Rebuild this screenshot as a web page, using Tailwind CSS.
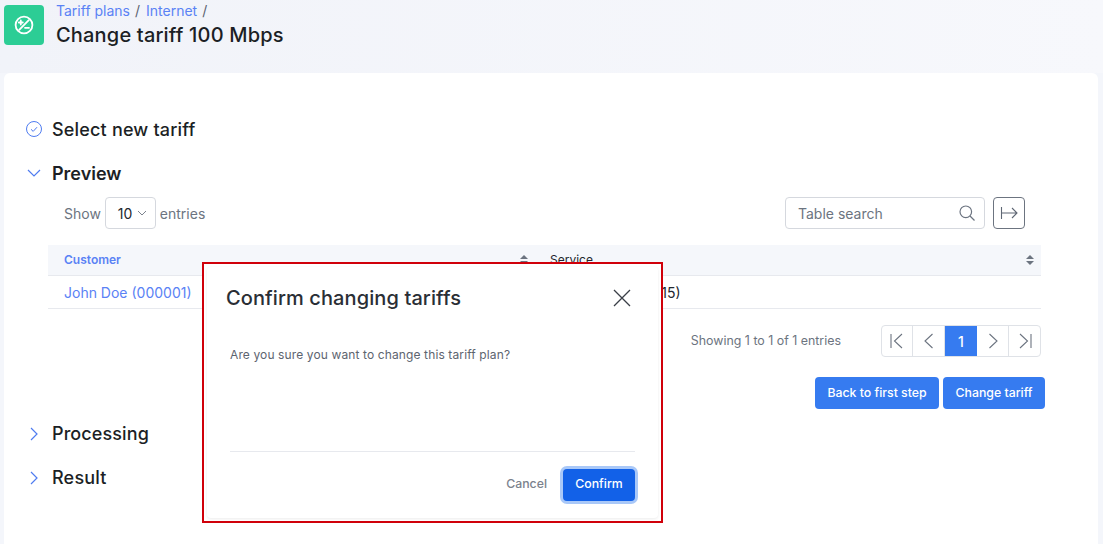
<!doctype html>
<html lang="en">
<head>
    <title>Change tariff</title>
    <meta charset="UTF-8">
    <meta name="viewport" content="width=device-width, initial-scale=1.0">
    <script src="https://cdn.jsdelivr.net/npm/@tailwindcss/browser@4"></script>
</head>
<body class="relative h-[544px] w-[1103px] overflow-hidden bg-[#f4f6fb] font-['Inter',sans-serif] text-[#1c1f25]">

<!-- Page header -->
<header class="flex h-[73px] items-start pl-1 bg-gradient-to-r from-[#f1f3f9] to-[#f7f8fc]">
    <div class="mt-[5px] flex size-10 items-center justify-center rounded-[4px] bg-[#2ccd95]">
        <svg class="size-[20px]" viewBox="0 0 20 20" fill="none" stroke="white" stroke-width="1.8" stroke-linecap="round">
            <circle cx="10" cy="10" r="8.4"/>
            <path d="M5.2 14.8 14.8 5.200"/>
            <path d="M4.800 7.500h4M6.800 5.500v4"/>
            <path d="M11 12.800h4"/>
        </svg>
    </div>
    <div class="ml-3">
        <div class="flex h-[22px] items-center text-[14px] leading-[22px] text-[#5b6270]">
            <span class="text-[#5a82f5]">Tariff plans</span><span class="ml-[5px] mr-[6px]">/</span><span class="text-[#5a82f5]">Internet</span><span class="ml-[5px]">/</span>
        </div>
        <h1 class="mt-[1px] text-[20px] leading-[24px] font-medium tracking-[0.18px]">Change tariff 100 Mbps</h1>
    </div>
</header>

<!-- Main card -->
<main class="ml-1 h-[480px] w-[1094px] rounded-t-[6px] bg-white pt-[44px]">
    <div class="flex h-6 items-center pl-[21px]">
        <svg class="size-[18px]" viewBox="0 0 18 18" fill="none" stroke="#4f7cf0" stroke-width="1">
            <circle cx="9" cy="9" r="7.5"/>
            <path d="M6 9.3 8.2 11.4 12 7.2"/>
        </svg>
        <h2 class="ml-[9px] mt-[2px] text-[18px] leading-6 font-medium tracking-[0.18px]">Select new tariff</h2>
    </div>

    <div class="mt-5 flex h-6 items-center pl-[21px]">
        <svg class="size-[18px]" viewBox="0 0 18 18" fill="none" stroke="#4f7cf0" stroke-width="1.2">
            <path d="M3 6 9 12 15 6"/>
        </svg>
        <h2 class="ml-[9px] mt-[2px] text-[18px] leading-6 font-semibold">Preview</h2>
    </div>

    <!-- Table controls -->
    <div class="mt-3 flex h-8 items-center pl-[60px] pr-[73px] text-[14px] text-[#6c7480]">
        <span>Show</span>
        <div class="ml-1 flex h-8 w-[51px] items-center rounded border border-[#d5d8de] pl-3 text-[#23272e]">
            10
            <svg class="ml-[5px] size-[10px]" viewBox="0 0 10 10" fill="none" stroke="#7c838e" stroke-width="1"><path d="M1 3 5 7 9 3"/></svg>
        </div>
        <span class="ml-1">entries</span>
        <div class="ml-auto flex h-8 w-[200px] items-center justify-between rounded border border-[#d5d8de] pl-3 pr-[9px]">
            <span>Table search</span>
            <svg class="size-4" viewBox="0 0 16 16" fill="none" stroke="#6c7480" stroke-width="1.2"><circle cx="6.8" cy="6.8" r="5.8"/><path d="M11 11 15.5 15.5"/></svg>
        </div>
        <div class="ml-2 flex h-8 w-8 items-center justify-center rounded border border-[#6c7480]">
            <svg class="size-[18px]" viewBox="0 0 18 18" fill="none" stroke="#5f6774" stroke-width="1.1"><path d="M1.5 3v12M1.5 9H17M12 4l5 5-5 5"/></svg>
        </div>
    </div>

    <!-- Table -->
    <div class="ml-11 mt-4 w-[993px]">
        <div class="flex h-[31px] border-b border-[#e7e9ee] bg-[#f5f7fb] text-[12px] font-semibold">
            <div class="flex w-[486px] items-center justify-between pl-4 pr-[6px] text-[#5a82f5]">
                Customer
                <svg class="h-[10px] w-2" viewBox="0 0 8 10" fill="#6c7480"><path d="M4 0 8 4H0ZM4 10 0 6H8Z"/></svg>
            </div>
            <div class="flex flex-1 items-center justify-between pl-4 pr-[7px] font-normal text-[#23272e]">
                Service
                <svg class="h-[10px] w-2" viewBox="0 0 8 10" fill="#6c7480"><path d="M4 0 8 4H0ZM4 10 0 6H8Z"/></svg>
            </div>
        </div>
        <div class="flex h-[33px] items-center border-b border-[#e7e9ee] text-[14px]">
            <div class="w-[486px] pl-4 text-[#5a82f5]">John Doe (000001)</div>
            <div class="pl-4 whitespace-nowrap text-[#23272e]">Internet tariffs (#15)</div>
        </div>
    </div>

    <!-- Pagination -->
    <div class="ml-11 mt-4 flex w-[993px] items-center justify-end text-[12.4px] text-[#6c7480]">
        <span class="mr-10">Showing 1 to 1 of 1 entries</span>
        <div class="flex h-8 overflow-hidden rounded border border-[#dfe2e7]">
            <div class="flex w-[31px] items-center justify-center border-r border-[#dfe2e7]">
                <svg class="size-4" viewBox="0 0 16 16" fill="none" stroke="#6c7480" stroke-width="1.1"><path d="M2 1v14M13 1 5.5 8 13 15"/></svg>
            </div>
            <div class="flex w-8 items-center justify-center border-r border-[#dfe2e7]">
                <svg class="size-4" viewBox="0 0 16 16" fill="none" stroke="#6c7480" stroke-width="1.1"><path d="M11.5 1 4 8l7.500 7"/></svg>
            </div>
            <div class="flex w-8 items-center justify-center bg-[#367bf0] text-[14px] font-medium text-white">1</div>
            <div class="flex w-8 items-center justify-center border-r border-[#dfe2e7]">
                <svg class="size-4" viewBox="0 0 16 16" fill="none" stroke="#6c7480" stroke-width="1.1"><path d="M4.500 1 12 8l-7.500 7"/></svg>
            </div>
            <div class="flex w-[31px] items-center justify-center">
                <svg class="size-4" viewBox="0 0 16 16" fill="none" stroke="#6c7480" stroke-width="1.1"><path d="M14 1v14M3 1 10.500 8 3 15"/></svg>
            </div>
        </div>
    </div>

    <!-- Step buttons -->
    <div class="mt-5 flex justify-end gap-1 pr-[53px] text-[12.3px] font-medium text-white">
        <button class="h-8 w-[124px] rounded bg-[#367bf0]">Back to first step</button>
        <button class="h-8 w-[102px] rounded bg-[#367bf0]">Change tariff</button>
    </div>

    <div class="mt-[13px] flex h-6 items-center pl-[21px]">
        <svg class="size-[18px]" viewBox="0 0 18 18" fill="none" stroke="#4f7cf0" stroke-width="1.2"><path d="M6 3 12 9 6 15"/></svg>
        <h2 class="ml-[9px] text-[18px] leading-6 font-medium tracking-[0.1px]">Processing</h2>
    </div>
    <div class="mt-5 flex h-6 items-center pl-[21px]">
        <svg class="size-[18px]" viewBox="0 0 18 18" fill="none" stroke="#4f7cf0" stroke-width="1.2"><path d="M6 3 12 9 6 15"/></svg>
        <h2 class="ml-[9px] text-[18px] leading-6 font-medium tracking-[0.2px]">Result</h2>
    </div>
</main>

<!-- Confirm modal, highlighted by the red frame -->
<div class="absolute left-[202px] top-[262px] h-[261px] w-[461px] border-2 border-[#d0000a] bg-white p-[3px]">
    <div class="h-full rounded-[4px] bg-white pl-[19px] pr-[23px] shadow-[0_1px_3px_rgba(0,0,0,0.08)]">
        <div class="flex h-[60px] items-center justify-between pt-[2px]">
            <h3 class="text-[20px] leading-6 font-medium tracking-[0.1px] text-[#2a2e35]">Confirm changing tariffs</h3>
            <svg class="mr-1 size-[18px]" viewBox="0 0 18 18" fill="none" stroke="#3a3f47" stroke-width="1.3"><path d="M1 1 17 17M17 1 1 17"/></svg>
        </div>
        <p class="ml-1 mt-[19px] text-[12px] leading-[18px] tracking-[0.12px] text-[#5d646f]">Are you sure you want to change this tariff plan?</p>
        <div class="ml-1 mt-[87px] flex h-[65px] items-center justify-end border-t border-[#e7e9ee] pt-[1px]">
            <span class="mr-4 text-[12.3px] font-medium text-[#7b828d]">Cancel</span>
            <button class="h-8 w-[72px] rounded-[4px] bg-[#1261e8] text-[12.3px] font-medium text-white ring-[3px] ring-[#a9c8f8]">Confirm</button>
        </div>
    </div>
</div>

</body>
</html>
